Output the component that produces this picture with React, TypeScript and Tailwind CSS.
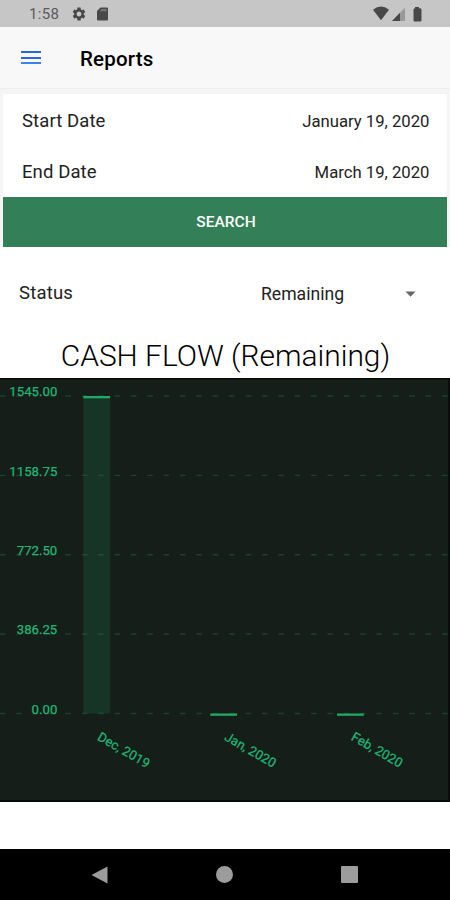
import { MdSettings } from "react-icons/md"

const font = "font-['Roboto',sans-serif]"

const gridLines = [
    { label: "1545.00", y: 18 },
    { label: "1158.75", y: 97.4 },
    { label: "772.50", y: 176.7 },
    { label: "386.25", y: 256 },
    { label: "0.00", y: 335.5 },
]

const bars = [
    { label: "Dec, 2019", x: 83.3, height: 317.5 },
    { label: "Jan, 2020", x: 210.3, height: 0 },
    { label: "Feb, 2020", x: 337, height: 0 },
]

const StatusBar = () => {
    return (
        <div className="flex h-[27px] items-center bg-[#c6c6c6] pl-[29px] pr-[22px] text-[#484848]">
            <span className="mt-[2px] w-[42px] text-[15px] leading-none tracking-[0.3px] text-[#5a5a5a]">1:58</span>
            <MdSettings size={16} />
            <svg className="ml-[9px]" width="13" height="14" viewBox="0 0 13 14">
                <path d="M4.5 0.5H11q1 0 1 1V12.500q0 1-1 1H2q-1 0-1-1V4Z" fill="#484848" />
                <path d="M3.500 4.200L5.800 2H10.500V4.200Z" fill="#777" />
            </svg>
            <svg className="ml-auto" width="56" height="20" viewBox="0 0 56 20">
                <path d="M1 5.8Q9 -0.6 17 5.8L9 16.3Z" fill="#484848" />
                <path d="M33 3.8V17H20Z" fill="#999" />
                <path d="M28 8.800V17H20Z" fill="#484848" />
                <path d="M43 3h4v1.300h1.500l1 1.200v11q0 1-1 1h-6q-1 0-1-1v-11l1-1.200H43Z" fill="#484848" />
            </svg>
        </div>
    )
}

const Chart = () => {
    return (
        <svg className="block" width="450" height="424" viewBox="0 0 450 424">
            <rect width="450" height="424" fill="#050a08" />
            <rect x="0" y="1.5" width="448.3" height="420.5" fill="#161e1a" />
            {gridLines.map((line) => (
                <g key={line.label}>
                    <line
                        x1="0"
                        x2="450"
                        y1={line.y}
                        y2={line.y}
                        stroke="#17422f"
                        strokeWidth="1.4"
                        strokeDasharray="5.5 10.87"
                    />
                    <text
                        x="57.3"
                        y={line.y + 0.3}
                        textAnchor="end"
                        fontSize="13.2"
                        fill="#20b573"
                        stroke="#20b573"
                        strokeWidth="0.25"
                    >
                        {line.label}
                    </text>
                </g>
            ))}
            {bars.map((bar) => (
                <g key={bar.label}>
                    <rect
                        x={bar.x}
                        y={335.5 - bar.height}
                        width="26.8"
                        height={bar.height}
                        fill="#1a8a50"
                        fillOpacity="0.22"
                    />
                    <rect x={bar.x} y={335.5 - bar.height} width="26.8" height="2.3" fill="#20a868" />
                    <text
                        transform={`translate(${bar.x + 13.3} 361.5) rotate(30)`}
                        fontSize="13.1"
                        fill="#20b573"
                        stroke="#20b573"
                        strokeWidth="0.25"
                    >
                        {bar.label}
                    </text>
                </g>
            ))}
        </svg>
    )
}

const App = () => {
    return (
        <div className={`${font} flex h-[900px] w-[450px] flex-col overflow-hidden bg-white text-[#222]`}>
            <StatusBar />
            <header className="flex h-[62px] items-center border-b border-[#eeeeee] bg-[#f8f8f8] pl-[21px]">
                <button className="flex w-5 flex-col gap-[3.5px]" aria-label="Menu">
                    <span className="h-[2px] w-full bg-[#2868dc]" />
                    <span className="h-[2px] w-full bg-[#2868dc]" />
                    <span className="h-[2px] w-full bg-[#3d83ef]" />
                </button>
                <h1 className="ml-[39px] mt-[3px] text-[20.5px] font-medium leading-none tracking-[0.2px] text-black">Reports</h1>
            </header>

            <section className="h-[158px] border-x-[3px] border-t-[5px] border-[#f5f5f5]">
                <div className="flex h-[52px] items-center justify-between pl-[19px] pr-[17.5px] pt-[3px]">
                    <span className="text-[18.5px] tracking-[0.1px]">Start Date</span>
                    <span className="text-[16.7px]">January 19, 2020</span>
                </div>
                <div className="flex h-[51px] items-center justify-between pl-[19px] pr-[17.5px] pt-[2px]">
                    <span className="text-[18.5px] tracking-[0.1px]">End Date</span>
                    <span className="text-[16.7px]">March 19, 2020</span>
                </div>
                <button className="h-[50px] w-full bg-[#338058] pl-[2px] pt-[2px] text-[15.5px] font-medium text-white">
                    SEARCH
                </button>
            </section>

            <div className="flex h-[92px] items-center pl-[19px] pr-[34px] pt-[2px]">
                <span className="w-[242px] text-[18.5px] tracking-[0.2px]">Status</span>
                <span className="text-[17.6px]">Remaining</span>
                <svg className="ml-auto" width="11" height="6" viewBox="0 0 11 6">
                    <path d="M0.5 0.5h10L5.5 5.7Z" fill="#666" />
                </svg>
            </div>

            <h2 className="h-[39px] pl-[1px] text-center text-[29.900px] font-light leading-[34px] text-black">
                CASH FLOW (Remaining)
            </h2>
            <Chart />

            <nav className="mt-auto flex h-[51px] items-center justify-between bg-black pl-[91px] pr-[92px]">
                <svg width="17" height="18" viewBox="0 0 17 18">
                    <path d="M0.5 9L16.5 0.5V17.5Z" fill="#9c9c9c" />
                </svg>
                <span className="size-[17px] rounded-full bg-[#9c9c9c]" />
                <span className="size-[17px] rounded-[1px] bg-[#9c9c9c]" />
            </nav>
        </div>
    )
}

export default App
